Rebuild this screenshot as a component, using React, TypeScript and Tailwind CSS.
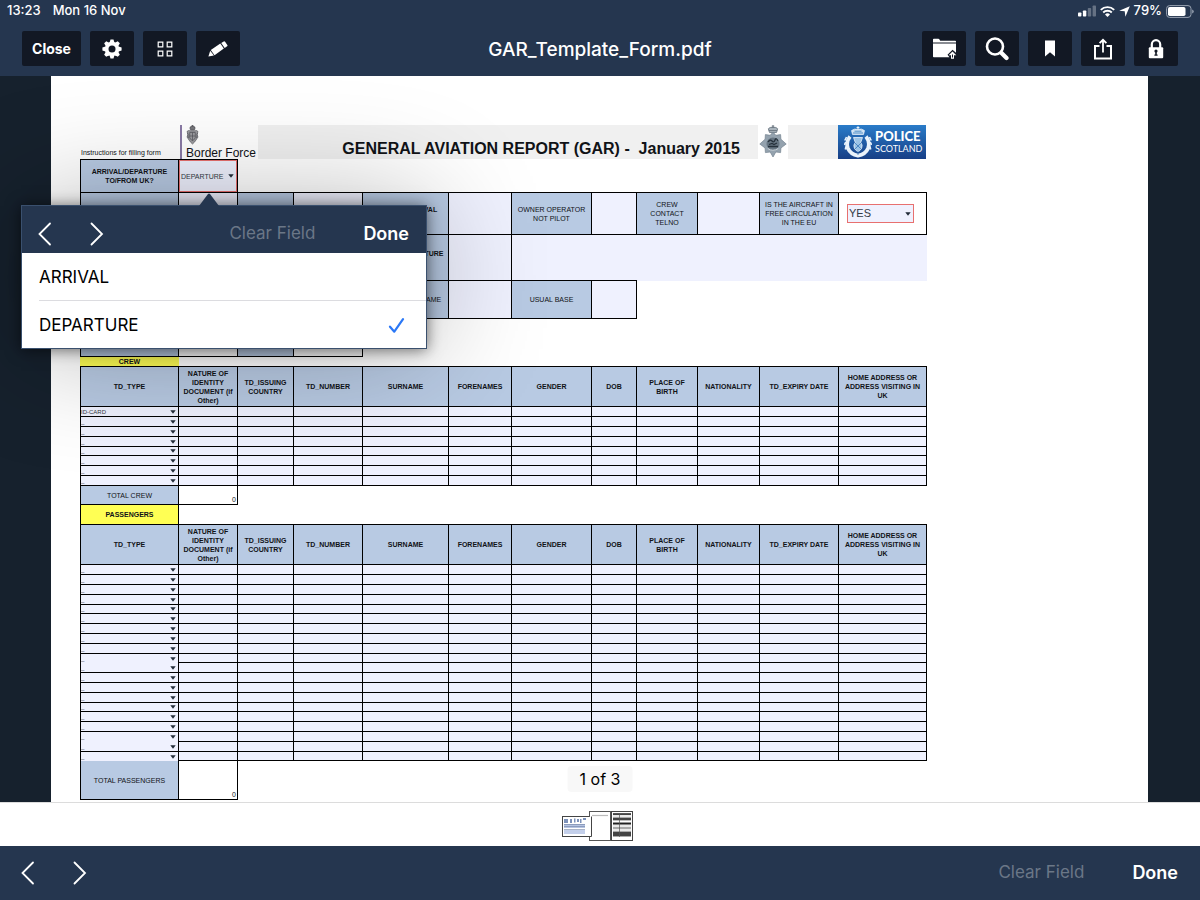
import React from 'react';
import clsx from 'clsx';

const COLUMN_WIDTHS = [99, 59, 56, 69, 86, 63, 80, 45, 61, 62, 79, 88];

const HEADINGS = [
  'TD_TYPE',
  'NATURE OF\nIDENTITY\nDOCUMENT (if\nOther)',
  'TD_ISSUING\nCOUNTRY',
  'TD_NUMBER',
  'SURNAME',
  'FORENAMES',
  'GENDER',
  'DOB',
  'PLACE OF\nBIRTH',
  'NATIONALITY',
  'TD_EXPIRY DATE',
  'HOME ADDRESS OR\nADDRESS VISITING IN\nUK',
];

const LINE = 'border-black';

/* Icons */

const ChevronLeft = () => (
  <svg width="14" height="24" viewBox="0 0 14 24" fill="none" stroke="currentColor" strokeWidth="1.8" strokeLinecap="round">
    <path d="M12 1.5 1.5 12 12 22.5" />
  </svg>
);

const ChevronRight = () => (
  <svg width="14" height="24" viewBox="0 0 14 24" fill="none" stroke="currentColor" strokeWidth="1.8" strokeLinecap="round">
    <path d="M1.5 1.5 12 12 1.5 22.5" />
  </svg>
);

const GearIcon = () => (
  <svg width="20" height="20" viewBox="0 0 20 20">
    <g fill="currentColor">
      {[0, 45, 90, 135].map((angle) => (
        <path key={angle} transform={`rotate(${angle} 10 10)`} d="M7.6 3.5 8.5.4h3l.9 3.1v13l-.9 3.1h-3l-.9-3.1z" />
      ))}
      <circle cx="10" cy="10" r="7.2" />
    </g>
    <circle cx="10" cy="10" r="3.5" fill="#121824" />
  </svg>
);

const GridIcon = () => (
  <svg width="16" height="16" viewBox="0 0 16 16" fill="none" stroke="currentColor" strokeWidth="1.2">
    <path d="M1.2 1.2h4.6v4.6H1.2zM10.2 1.2h4.6v4.6h-4.6zM1.2 10.2h4.6v4.6H1.2zM10.2 10.2h4.6v4.6h-4.6z" />
  </svg>
);

const PencilIcon = () => (
  <svg width="20" height="16" viewBox="0 0 20 16" fill="currentColor">
    <path d="M.4 15.4 2.2 9.7 5.9 14.6z" />
    <path d="M2.8 9.1 12.3 2.5l3.5 5-9.3 6.8z" />
    <path d="M13.2 1.9 15.7.4q.8-.5 1.4.3l2.2 3.2q.5.8-.2 1.4l-2.4 1.6z" />
  </svg>
);

const FolderIcon = () => (
  <svg width="25" height="22" viewBox="0 0 25 22">
    <path fill="currentColor" d="M1 1.6Q1 .8 1.8.8h4.6q.6 0 .9.5l.9 1.4h15q.8 0 .8.8v.9H1zM1 5.4h23v9.3l-3.5-3-5 5 2 2.5H1.8q-.8 0-.8-.8z" />
    <path fill="currentColor" d="m20.5 13.5 3.8 3.8H22v3.4h-3v-3.4h-2.3z" />
    <path fill="#121824" d="M20 16.5h1v3h-1z" />
  </svg>
);

const SearchIcon = () => (
  <svg width="24" height="24" viewBox="0 0 24 24" fill="none" stroke="currentColor">
    <circle cx="10" cy="9.5" r="8" strokeWidth="2.6" />
    <path d="m16.5 16 5 5" strokeWidth="4.2" strokeLinecap="round" />
  </svg>
);

const BookmarkIcon = () => (
  <svg width="10" height="17" viewBox="0 0 10 17" fill="currentColor">
    <path d="M0 .4h10v16.2l-5-4.4-5 4.4z" />
  </svg>
);

const ShareIcon = () => (
  <svg width="20" height="22" viewBox="0 0 20 22" fill="none" stroke="currentColor" strokeWidth="2">
    <path d="M6.5 8H2v12.6h16V8h-4.5" />
    <path d="M10 14.5V2.5M6.6 5.2 10 1.8l3.4 3.4" strokeWidth="1.8" />
  </svg>
);

const LockIcon = () => (
  <svg width="16" height="20" viewBox="0 0 16 20">
    <path d="M3.8 9V5.4a4.2 4.2 0 0 1 8.4 0V9" fill="none" stroke="currentColor" strokeWidth="2.2" />
    <rect x=".8" y="8.3" width="14.4" height="11" rx="1" fill="currentColor" />
    <circle cx="8" cy="12" r="1.6" fill="#121824" />
    <path d="M7.2 12.5h1.6v3h.8v1.3H6.4v-1.3h.8z" fill="#121824" />
  </svg>
);

const StatusIcons = () => (
  <>
    <svg width="18" height="12" viewBox="0 0 18 12" fill="currentColor">
      <rect x="0" y="7.5" width="3.4" height="4" rx=".8" />
      <rect x="4.9" y="5.5" width="3.4" height="6" rx=".8" />
      <rect x="9.8" y="3" width="3.4" height="8.5" rx=".8" opacity=".3" />
      <rect x="14.6" y=".5" width="3.4" height="11" rx=".8" opacity=".3" />
    </svg>
    <svg width="15" height="11" viewBox="0 0 15 11" fill="none" stroke="currentColor" strokeWidth="1.9">
      <path d="M.8 3.9a9.5 9.5 0 0 1 13.4 0M3.2 6.5a6.1 6.1 0 0 1 8.6 0" />
      <path d="M7.5 11 5 8.4a3.6 3.6 0 0 1 5 0z" fill="currentColor" stroke="none" />
    </svg>
    <svg width="11" height="11" viewBox="0 0 11 11" fill="currentColor">
      <path d="M10.8.2 6.4 10.8l-.7-5.500L.2 4.700z" />
    </svg>
  </>
);

const BatteryIcon = () => (
  <svg width="28" height="13" viewBox="0 0 28 13">
    <rect x=".6" y=".6" width="24.4" height="11.8" rx="3" fill="none" stroke="#9aa4b3" strokeWidth="1" />
    <rect x="2" y="2" width="17.5" height="9" rx="1.8" fill="#fff" />
    <path d="M26.2 4.5q1.5.5 1.5 2t-1.5 2z" fill="#9aa4b3" />
  </svg>
);

const RoyalCrest = () => (
  <svg width="13" height="20" viewBox="0 0 13 20" fill="#77777b" stroke="#4a4a50" strokeWidth=".6">
    <path d="M4 3.5Q3.2 1.5 6.5 1q3.3.5 2.5 2.5l-.6 1.6H4.6z" />
    <path d="M6.5 0v1.5M5.5.6h2" />
    <path d="M1 6.5q1.5-1.6 3-.7h5q1.5-.9 3 .7l-1 3 1 2.5-2 3q-1.5 2.5-3.5 4-2-1.500-3.500-4l-2-3 1-2.500z" fill="#9b9b9f" />
    <path d="M3.7 7.5h5.6v5q-.5 2.2-2.8 3-2.3-.8-2.800-3zM6.5 7.5v8M3.700 11h5.600M1.500 8l1 5M11.500 8l-1 5" fill="none" />
  </svg>
);

const PoliceStar = () => (
  <svg width="28" height="33" viewBox="0 0 28 33">
    <path d="M10.5 7.5 9.3 3.8q1.5-2 4.7-1.3 3.2-.7 4.700 1.300l-1.200 3.700z" fill="#a9b3bb" stroke="#66727d" strokeWidth=".8" />
    <path d="M14 0v3M12.7 1.2h2.6M9.8 5.6h8.4" stroke="#66727d" strokeWidth=".9" />
    <path d="m14 7 2.8 3.3 4.800-.7.300 4.600 5.300 4.800-5.300 4-.3 4.600-4.800-.6L14 32l-2.800-5-4.800.6-.3-4.600-5.300-4 5.300-4.800.3-4.600 4.800.7z" fill="#94a2ae" stroke="#74838f" strokeWidth=".7" />
    <circle cx="14" cy="19" r="6.5" fill="#667582" />
    <path d="M9 17q2-3 4-1t3-1 3 1M9 21.5h10M10 19.5l3-1 2 1 3-1.5" fill="none" stroke="#26313b" strokeWidth="1.3" />
    <path d="M8.8 23.5q5 3.5 10.4 0" fill="none" stroke="#ced6dc" strokeWidth="1" />
  </svg>
);

const ScotlandCrest = () => (
  <svg width="28" height="32" viewBox="0 0 28 32" fill="none" stroke="#e9f2fb">
    <path d="M8.5 8.5 7.5 4.6Q10 2.3 14 3.3q4-1 6.5 1.3l-1 3.9z" fill="#cfe2f3" strokeWidth=".7" />
    <path d="M14 .2v3.5M12.6 1.5h2.8" strokeWidth="1.1" />
    <path d="M9 7h10M10.5 5.2h7" stroke="#2f79bb" strokeWidth=".8" />
    <path d="M6 10.5Q1.5 16 4 22.5q2.7 6 10 7.2 7.3-1.2 10-7.200 2.500-6.500-2-12" strokeWidth="3.8" />
    <path d="M2.5 11 .8 14.5M1.8 16l-1.500 3M2 20.500l-.7 3M25.500 11l1.700 3.500M26.200 16l1.500 3M26 20.500l.7 3" strokeWidth="1.6" />
    <path d="M9.5 11.5h9l-1.8 5q2.3 2.300 1 5.500-1.200 2.500-3.700 3.800-2.500-1.300-3.700-3.800-1.300-3.200 1-5.500z" fill="#9cc4e6" strokeWidth=".8" />
    <path d="m11 17 6 6M17 17l-6 6M14 25v4" stroke="#2b6fb3" strokeWidth=".7" />
  </svg>
);

const Caret = () => (
  <svg width="6" height="4" viewBox="0 0 6 4" className="pointer-events-none">
    <path d="M.3.3h5.4L3 3.8z" fill="#222b38" />
  </svg>
);

/* Toolbar */

interface ToolButtonProps {
  label: string;
  children: React.ReactNode;
}

const ToolButton: React.FC<ToolButtonProps> = ({ label, children }) => (
  <button type="button" aria-label={label} className="flex h-[35px] w-11 items-center justify-center rounded-xs bg-[#121824] text-white">
    {children}
  </button>
);

const TopBar = () => (
  <header className="h-[76px] bg-[#25364f] text-white">
    <div className="flex h-[22px] items-center justify-between pr-[6px] pl-[7px] text-[13px] font-medium">
      <div className="flex gap-3">
        <span>13:23</span>
        <span>Mon 16 Nov</span>
      </div>
      <div className="flex items-center gap-1">
        <StatusIcons />
        <span>79%</span>
        <BatteryIcon />
      </div>
    </div>
    <div className="grid grid-cols-[1fr_auto_1fr] items-center px-[22px] pt-[9px]">
      <div className="flex gap-[9px]">
        <button type="button" className="h-[35px] w-[59px] rounded-xs bg-[#121824] text-sm font-bold">Close</button>
        <ToolButton label="Settings"><GearIcon /></ToolButton>
        <ToolButton label="Pages"><GridIcon /></ToolButton>
        <ToolButton label="Annotate"><PencilIcon /></ToolButton>
      </div>
      <h1 className="pt-[2px] text-[19px] leading-6 font-medium">GAR_Template_Form.pdf</h1>
      <div className="flex justify-end gap-[9px]">
        <ToolButton label="Move to folder"><FolderIcon /></ToolButton>
        <ToolButton label="Search"><SearchIcon /></ToolButton>
        <ToolButton label="Bookmark"><BookmarkIcon /></ToolButton>
        <ToolButton label="Share"><ShareIcon /></ToolButton>
        <ToolButton label="Lock"><LockIcon /></ToolButton>
      </div>
    </div>
  </header>
);

/* Form cells */

interface CellProps {
  children?: React.ReactNode;
  className?: string;
  colSpan?: number;
}

const LabelCell: React.FC<CellProps> = ({ children, className, colSpan }) => (
  <td colSpan={colSpan} className={clsx('border-r border-b bg-[#b8cae3] px-0 pt-0 text-center whitespace-pre-line', LINE, className)}>
    {children}
  </td>
);

const InputCell: React.FC<CellProps & { label: string; tall?: boolean; border?: string }> = ({ label, tall, colSpan, border = 'border-r border-b' }) => (
  <td colSpan={colSpan} className={clsx('bg-[#eff1fe] p-0', LINE, border)}>
    <input type="text" aria-label={label} className={clsx('block w-full px-1 outline-none', tall ? 'h-8' : 'h-2')} />
  </td>
);

interface PersonRowsProps {
  group: string;
  count: number;
  firstType?: string;
  unruled?: number[];
}

const PersonRows: React.FC<PersonRowsProps> = ({ group, count, firstType = '_', unruled = [] }) => (
  <>
    {Array.from({ length: count }, (_, row) => (
      <tr key={row} className={row % 5 === 4 ? 'h-[9px]' : 'h-[10px]'}>
        <td className={clsx('border-r border-l bg-[#eff1fe] p-0', LINE, !unruled.includes(row) && 'border-b')}>
          <div className="flex h-2 items-center pr-[2px]">
            <select aria-label={`${group} ${row + 1} TD_TYPE`} className="h-2 flex-1 appearance-none text-[6px] leading-[8px] text-[#333a45] outline-none">
              <option>{row === 0 ? firstType : '_'}</option>
            </select>
            <Caret />
          </div>
        </td>
        {HEADINGS.slice(1).map((heading) => (
          <InputCell key={heading} label={`${group} ${row + 1} ${heading}`} />
        ))}
      </tr>
    ))}
  </>
);

const HeadingRow = () => (
  <tr className="h-10">
    {HEADINGS.map((heading, i) => (
      <th key={heading} scope="col" className={clsx('border-r border-b bg-[#b8cae3] p-0 font-bold whitespace-pre-line', LINE, i === 0 && 'border-l')}>
        {heading}
      </th>
    ))}
  </tr>
);

const TotalCell = () => (
  <td className={clsx('border-r border-b p-0 pr-[1px] text-right align-bottom', LINE)}>0</td>
);

const ReportTable = () => (
  <table className="w-full table-fixed border-separate border-spacing-0 text-[7px] leading-[9px] text-[#111317]">
    <colgroup>
      {COLUMN_WIDTHS.map((width, i) => (
        <col key={i} style={{ width }} />
      ))}
    </colgroup>
    <tbody>
      <tr className="h-[34px]">
        <LabelCell className="border-t border-l font-bold">{'ARRIVAL/DEPARTURE\nTO/FROM UK?'}</LabelCell>
        <td className={clsx('border-t border-r border-b bg-[#eff1fe] p-0', LINE)}>
          <div className="flex h-8 items-center border border-[#e8706f] pr-[2px] pl-[1px]">
            <select aria-label="Arrival or departure" defaultValue="DEPARTURE" className="min-w-0 flex-1 appearance-none text-[7px] text-[#333a45] outline-none">
              <option>ARRIVAL</option>
              <option>DEPARTURE</option>
            </select>
            <Caret />
          </div>
        </td>
        <td colSpan={10} className={clsx('border-b p-0', LINE)} />
      </tr>
      <tr className="h-[42px]">
        <LabelCell className="border-l font-bold">REGISTRATION</LabelCell>
        <InputCell tall label="Registration" />
        <LabelCell>TYPE</LabelCell>
        <InputCell tall label="Type" />
        <LabelCell className="pb-2 font-bold">PORT OF ARRIVAL</LabelCell>
        <InputCell tall label="Port of arrival" />
        <LabelCell>{'OWNER OPERATOR\nNOT PILOT'}</LabelCell>
        <InputCell tall label="Owner operator" />
        <LabelCell>{'CREW\nCONTACT\nTELNO'}</LabelCell>
        <InputCell tall label="Crew contact" />
        <LabelCell>{'IS THE AIRCRAFT IN\nFREE CIRCULATION\nIN THE EU'}</LabelCell>
        <td className={clsx('border-r border-b p-0 pr-3 pl-2', LINE)}>
          <div className="flex h-[19px] items-center border border-[#e8706f] bg-[#eff1fe] pr-[2px] pl-[1px]">
            <select aria-label="Free circulation" className="min-w-0 flex-1 appearance-none text-[11px] text-[#333a45] outline-none">
              <option>YES</option>
              <option>NO</option>
            </select>
            <Caret />
          </div>
        </td>
      </tr>
      <tr className="h-[46px]">
        <LabelCell className="border-l font-bold">DATE</LabelCell>
        <InputCell tall label="Date" />
        <LabelCell>TIME</LabelCell>
        <InputCell tall label="Time" />
        <LabelCell className="pb-2 font-bold">PORT OF DEPARTURE</LabelCell>
        <InputCell tall label="Port of departure" />
        <InputCell tall label="Reason for visit" colSpan={2} border="border-b" />
        <InputCell tall label="Reason for visit, continued" colSpan={4} border="border-0" />
      </tr>
      <tr className="h-[38px]">
        <LabelCell className="border-l">CAPTAIN</LabelCell>
        <InputCell tall label="Captain" />
        <LabelCell>CONTACT</LabelCell>
        <InputCell tall label="Contact" />
        <LabelCell>RESPONSIBLE NAME</LabelCell>
        <InputCell tall label="Responsible name" />
        <LabelCell>USUAL BASE</LabelCell>
        <InputCell tall label="Usual base" />
        <td colSpan={4} />
      </tr>
      <tr className="h-[38px]">
        <LabelCell className="border-l" />
        <td className={clsx('border-r border-b', LINE)} />
        <LabelCell />
        <td className={clsx('border-r border-b', LINE)} />
        <td colSpan={8} />
      </tr>
      <tr className="h-[10px]">
        <td className={clsx('border-b bg-[#ffff54] p-0 text-center font-bold', LINE)}>CREW</td>
        <td colSpan={11} className={clsx('border-b p-0', LINE)} />
      </tr>
      <HeadingRow />
      <PersonRows group="Crew" count={8} firstType="ID-CARD" />
      <tr className="h-[19px]">
        <LabelCell className="border-l">TOTAL CREW</LabelCell>
        <TotalCell />
        <td colSpan={10} />
      </tr>
      <tr className="h-5">
        <td className={clsx('border-r border-b border-l bg-[#ffff54] p-0 text-center font-bold', LINE)}>PASSENGERS</td>
        <td colSpan={11} className={clsx('border-b p-0', LINE)} />
      </tr>
      <HeadingRow />
      <PersonRows group="Passenger" count={20} unruled={[9, 17, 19]} />
      <tr className="h-[39px]">
        <LabelCell className="border-l">TOTAL PASSENGERS</LabelCell>
        <TotalCell />
        <td colSpan={10} />
      </tr>
    </tbody>
  </table>
);

const ReportHeading = () => (
  <div className="flex h-[34px] items-stretch px-[1px] text-[#111317]">
    <p className="w-[99px] self-end pb-[2px] text-[7px] leading-[9px]">Instructions for filling form</p>
    <div className="w-[78px] border-l-2 border-[#8a7aa5] pl-1">
      <RoyalCrest />
      <p className="pt-[1px] text-xs leading-[14px] whitespace-nowrap">Border Force</p>
    </div>
    <div className="flex flex-1 justify-end bg-[#f0f0f0]">
      <h2 className="self-end text-base leading-5 font-bold whitespace-pre">GENERAL AVIATION REPORT (GAR) -  January 2015</h2>
      <div className="mr-[50px] ml-[18px] bg-white px-[1px]"><PoliceStar /></div>
    </div>
    <div className="flex w-[88px] items-center gap-[3px] bg-linear-to-b from-[#2a7cc9] to-[#173f86] pl-[6px] text-white">
      <ScotlandCrest />
      <p className="flex flex-col font-[Lato,sans-serif] text-[9px] leading-[11px]">
        <strong className="text-[13px] leading-[13px] font-black">POLICE</strong>
        <span>SCOTLAND</span>
      </p>
    </div>
  </div>
);

const FieldPopover = () => (
  <div className="absolute top-[129px] left-[21px] w-[406px] border border-[#3a506e] bg-white text-black shadow-[0_0_120px_rgba(0,0,0,0.3),0_1px_14px_rgba(0,0,0,0.55)]">
    <svg width="20" height="13" viewBox="0 0 20 13" className="absolute -top-[13px] left-[177px]">
      <path d="M0 13 9 1q1-1 2 0l9 12z" fill="#25364f" />
    </svg>
    <div className="flex h-[47px] items-center bg-[#25364f] pt-2 pr-[17px] pl-4 text-white">
      <button type="button" aria-label="Previous field"><ChevronLeft /></button>
      <button type="button" aria-label="Next field" className="ml-[38px]"><ChevronRight /></button>
      <button type="button" className="ml-auto text-[17px] text-[#6b7787]">Clear Field</button>
      <button type="button" className="ml-12 text-lg font-semibold">Done</button>
    </div>
    <ul className="pl-[17px] text-[17px]">
      <li className="border-b border-[#dcdce0]">
        <button type="button" className="flex h-[47px] w-full items-center pt-[2px]">ARRIVAL</button>
      </li>
      <li>
        <button type="button" className="flex h-[47px] w-full items-center justify-between pt-[2px] pr-[21px]">
          DEPARTURE
          <svg width="17" height="16" viewBox="0 0 17 16" fill="none" stroke="#2b78f6" strokeWidth="2.2" strokeLinecap="round" strokeLinejoin="round">
            <path d="m2 8.700 4.300 5L15 1.200" />
          </svg>
        </button>
      </li>
    </ul>
  </div>
);

const Thumbnails = () => (
  <svg width="72" height="32" viewBox="0 0 72 32">
    <rect x=".5" y="5.5" width="29" height="20" fill="#fff" stroke="#444" />
    <path d="M2 8h4v4H2zM8 8h2v4H8zM12 7.5h1.5v4H12zM15 8h2v3h-2zM18 8h1.5v4H18zM21 7h3v2h-3z" fill="#7d92ba" />
    <rect x="2" y="13" width="21" height="4" fill="#b6c4e2" />
    <rect x="2" y="19" width="21" height="4" fill="#c3cfea" />
    <path d="M2 13.5h21M2 15.5h21M2 18.5h21" stroke="#7182a5" strokeWidth=".6" />
    <rect x="27.5" y=".5" width="21" height="29" fill="#fff" stroke="#555" />
    <rect x="26" y="6" width="3.5" height="19" fill="#fff" />
    <path d="M29.5 5.5v20H26" fill="none" stroke="#444" />
    <path d="M30 4.5h16" stroke="#bbb" strokeWidth="1.2" />
    <rect x="49.5" y=".5" width="21" height="29" fill="#fff" stroke="#444" />
    <rect x="51" y="3" width="18" height="23" fill="#aaa" />
    <path d="M51 5h18M51 10.5h18M51 15h18M51 19h18" stroke="#fff" strokeWidth="1.4" />
    <path d="M51 3h18M51 8h18M51 12.5h18M51 22h18M51 24h18" stroke="#222" strokeWidth="1.3" />
    <path d="M57.5 3v23" stroke="#555" strokeWidth=".7" />
  </svg>
);

export default function App() {
  return (
    <div className="flex min-h-screen flex-col bg-[#16212d] font-[Inter,sans-serif]">
      <TopBar />
      <main className="relative flex-1">
        <section className="mr-[52px] ml-[51px] h-full bg-white pt-[49px] pr-[221px] pb-[2px] pl-[29px] font-['Liberation_Sans',Arial,sans-serif]">
          <ReportHeading />
          <ReportTable />
        </section>
        <FieldPopover />
        <p className="absolute bottom-[10px] left-1/2 -translate-x-1/2 rounded-sm bg-[#f8f8f8] px-3 py-[2px] text-base leading-[22px] text-black">1 of 3</p>
      </main>
      <div className="flex h-11 items-center justify-center border-t border-[#dcdcdc] bg-white pt-1">
        <button type="button" aria-label="Page thumbnails" className="mr-1"><Thumbnails /></button>
      </div>
      <footer className="flex h-[54px] items-center bg-[#25364f] pr-[22px] pl-[21px] text-white">
        <button type="button" aria-label="Previous field"><ChevronLeft /></button>
        <button type="button" aria-label="Next field" className="ml-[38px]"><ChevronRight /></button>
        <button type="button" className="ml-auto text-[17px] text-[#6b7787]">Clear Field</button>
        <button type="button" className="ml-12 text-lg font-semibold">Done</button>
      </footer>
    </div>
  );
}
